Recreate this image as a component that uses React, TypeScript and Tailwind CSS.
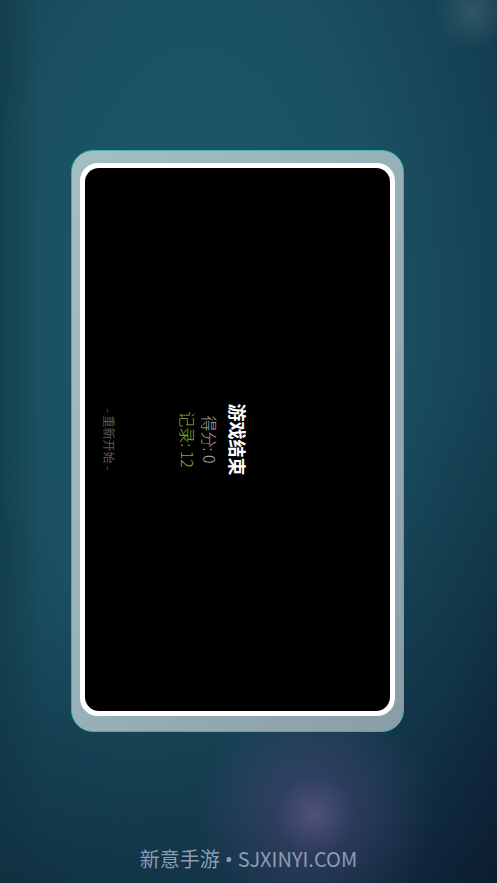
export default function App() {
  return (
    <div className="relative h-[883px] w-full overflow-hidden bg-[radial-gradient(circle_at_315px_815px,#6e6c9e_0px,rgba(90,88,140,0.55)_40px,rgba(40,50,90,0)_120px),radial-gradient(circle_at_474px_10px,rgba(100,130,142,0.35)_0px,rgba(60,100,115,0)_40px),radial-gradient(ellipse_at_40%_35%,#1e5968_0%,#1a5060_45%,#143f52_75%,#0f2338_100%)] font-['Noto_Sans_CJK_SC','Noto_Sans',sans-serif]">
      {/* darker left edge */}
      <div className="pointer-events-none absolute inset-y-0 left-0 w-[40px] bg-gradient-to-r from-[#123b47]/70 to-transparent" />
      {/* darker bottom-right */}
      <div className="pointer-events-none absolute inset-0 bg-[linear-gradient(150deg,rgba(0,0,0,0)_55%,rgba(10,20,40,0.45)_100%)]" />

      <div className="relative flex flex-col">
        {/* Game frame */}
        <div className="ml-[71px] mt-[150px] w-[333px] h-[582px] rounded-[22px] border border-[#3cb4b6] bg-gradient-to-br from-[#a4bec3] via-[#98b0b7] to-[#8a9da6] px-[8px] pt-[12px] pb-[15px]">
          <div className="h-full w-full rounded-[18px] bg-white p-[5px]">
            <div className="flex h-full w-full items-center justify-center overflow-hidden rounded-[14px] bg-black">
              <div className="flex h-[305px] w-[543px] shrink-0 rotate-90 flex-col items-center pt-[139px]">
                <p className="text-[18px] leading-[26px] font-bold text-white">游戏结束</p>
                <p className="mt-[4px] text-[16px] leading-[22px] font-light text-[#a8a8a8]">得分: 0</p>
                <p className="text-[16px] leading-[22px] font-light text-[#7fb52c]">记录: 12</p>
                <p className="mt-[60px] text-[12px] leading-[16px] text-[#5a5a5a]">-&nbsp;重新开始&nbsp;-</p>
              </div>
            </div>
          </div>
        </div>

        {/* Footer */}
        <p className="mt-[114px] text-center text-[20px] leading-[26px] text-[#8e9cb0]">
          新意手游<span className="font-['Noto_Sans',sans-serif]"> • </span>SJXINYI.COM
        </p>
      </div>
    </div>
  );
}
